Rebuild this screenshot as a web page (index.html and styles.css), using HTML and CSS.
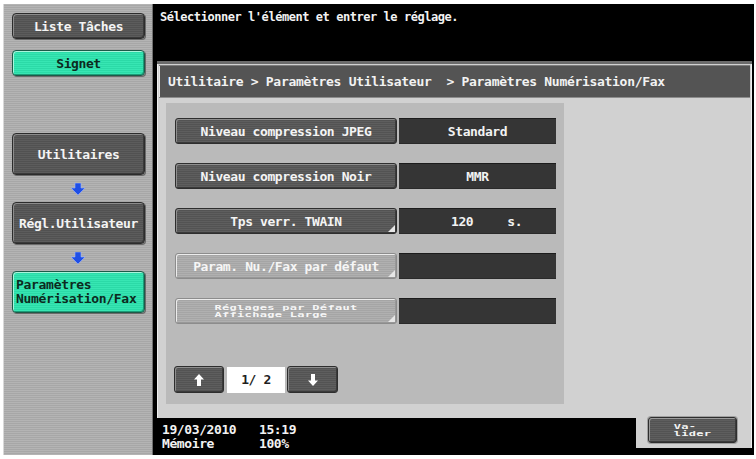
FILE: index.html
```html
<!DOCTYPE html>
<html lang="fr">
<head>
<meta charset="utf-8">
<title>Paramètres Numérisation/Fax</title>
<link rel="stylesheet" href="styles.css">
</head>
<body>
<div class="device">
  <aside class="side">
    <div class="nav dark short">Liste Tâches</div>
    <div class="nav green short signet">Signet</div>
    <div class="trail">
      <div class="nav dark tall">Utilitaires</div>
      <svg class="step" width="14" height="12" viewBox="0 0 14 12"><path d="M4 0h6v5h4L7 12 0 5h4z" fill="#1f4fe6" stroke="#9fb6ff" stroke-width="0.6"/></svg>
      <div class="nav dark tall">Régl.Utilisateur</div>
      <svg class="step" width="14" height="12" viewBox="0 0 14 12"><path d="M4 0h6v5h4L7 12 0 5h4z" fill="#1f4fe6" stroke="#9fb6ff" stroke-width="0.6"/></svg>
      <div class="nav green tall two">Paramètres<br>Numérisation/Fax</div>
    </div>
  </aside>

  <main class="main">
    <header class="message">Sélectionner l'élément et entrer le réglage.</header>

    <section class="panel">
      <div class="crumb">Utilitaire &gt; Paramètres Utilisateur  &gt; Paramètres Numérisation/Fax</div>

      <div class="content">
        <div class="list">
          <div class="row">
            <div class="key">Niveau compression JPEG</div>
            <div class="value">Standard</div>
          </div>
          <div class="row">
            <div class="key">Niveau compression Noir</div>
            <div class="value">MMR</div>
          </div>
          <div class="row">
            <div class="key sub">Tps verr. TWAIN</div>
            <div class="value split"><span>120</span><span>s.</span></div>
          </div>
          <div class="row">
            <div class="key sub off">Param. Nu./Fax par défaut</div>
            <div class="value"></div>
          </div>
          <div class="row">
            <div class="key sub off"><span class="squash">Réglages par Défaut<br>Affichage Large</span></div>
            <div class="value"></div>
          </div>

          <div class="pager">
            <div class="page-btn up">
              <svg width="10" height="12" viewBox="0 0 10 12"><path d="M5 0L10 5.5H7V12H3V5.5H0z" fill="#fff"/></svg>
            </div>
            <div class="page-num">1/ 2</div>
            <div class="page-btn down">
              <svg width="10" height="12" viewBox="0 0 10 12"><path d="M3 0H7V6.5H10L5 12L0 6.5H3z" fill="#fff"/></svg>
            </div>
          </div>
        </div>
      </div>

      <div class="bottom">
        <div class="status">
          <div class="status-line"><span class="col">19/03/2010</span><span>15:19</span></div>
          <div class="status-line"><span class="col">Mémoire</span><span>100%</span></div>
        </div>
        <div class="confirm">
          <div class="ok"><span class="squash">Va-<br>lider</span></div>
        </div>
      </div>
    </section>
  </main>
</div>
</body>
</html>
```

FILE: styles.css
```css
* {
  box-sizing: border-box;
}

body {
  margin: 0;
  background: #ffffff;
  font-family: "DejaVu Sans Mono", "Liberation Mono", monospace;
  font-size: 13px;
  font-weight: bold;
  letter-spacing: -0.4px;
  color: #f2f2f2;
}

.device {
  display: flex;
  width: 751px;
  height: 451px;
  margin: 4px 0 0 3px;
}

/* ---------- left navigation column ---------- */
.side {
  width: 150px;
  flex: none;
  padding: 9px 0 0 9px;
  background: repeating-linear-gradient(to bottom, #b4b4b4 0 1px, #a7a7a7 1px 2px);
  border-right: 1px solid #707070;
  box-shadow: inset 1px 0 0 #d8d8d8;
}

.nav {
  width: 133px;
  border-radius: 4px;
  display: flex;
  align-items: center;
  justify-content: center;
  text-align: center;
  border: 1px solid #2c2c2c;
}

.nav.short {
  height: 26px;
}

.nav.tall {
  height: 42px;
}

.nav.dark {
  background: repeating-linear-gradient(to bottom, #5c5c5c 0 1px, #515151 1px 2px);
  box-shadow: inset 1px 1px 0 #8c8c8c, inset -1px -1px 0 #3a3a3a, 1px 1px 0 #6a6a6a;
  color: #f4f4f4;
}

.nav.green {
  background: repeating-linear-gradient(to bottom, #37e6b3 0 1px, #2bdaa7 1px 2px);
  box-shadow: inset 1px 1px 0 #a8f5dc, inset -1px -1px 0 #1b9c78, 1px 1px 0 #6a6a6a;
  border-color: #1c5a48;
  color: #0c2a20;
}

.signet {
  margin-top: 11px;
}

.trail {
  margin-top: 57px;
  display: flex;
  flex-direction: column;
}

.step {
  display: block;
  margin: 8px 0 7px 59px;
}

.nav.two {
  justify-content: flex-start;
  text-align: left;
  padding-left: 3px;
  line-height: 14px;
  letter-spacing: -0.3px;
}

/* ---------- main area ---------- */
.main {
  flex: 1;
  display: flex;
  flex-direction: column;
  background: #000000;
}

.message {
  height: 57px;
  flex: none;
  padding: 6px 0 0 7px;
  font-size: 12px;
  letter-spacing: -0.45px;
}

.panel {
  flex: 1;
  margin: 0 2px 0 4px;
  display: flex;
  flex-direction: column;
  background: #d1d1d1;
  border-top: 3px solid #6b6b6b;
  box-shadow: inset 1px 0 0 #eeeeee, inset -1px 0 0 #eeeeee;
}

.crumb {
  height: 32px;
  flex: none;
  margin: 1px 2px 0 2px;
  padding: 0 0 0 9px;
  display: flex;
  align-items: center;
  white-space: pre;
  letter-spacing: -0.3px;
  background: #545454;
  box-shadow: inset 0 1px 0 #7c7c7c, inset 1px 0 0 #e6e6e6, 0 1px 0 #8c8c8c;
}

.content {
  flex: none;
  padding: 6px 0 0 9px;
}

.list {
  width: 398px;
  height: 301px;
  padding: 15px 0 0 9px;
  background: #bababa;
}

.row {
  display: flex;
  gap: 2px;
  height: 26px;
  margin-bottom: 19px;
}

.key {
  position: relative;
  width: 222px;
  height: 26px;
  border-radius: 3px;
  display: flex;
  align-items: center;
  justify-content: center;
  border: 1px solid #2e2e2e;
  background: repeating-linear-gradient(to bottom, #5e5e5e 0 1px, #535353 1px 2px);
  box-shadow: inset 1px 1px 0 #8e8e8e, inset -1px -1px 0 #3a3a3a;
  color: #f4f4f4;
}

/* corner mark for items that open a sub screen */
.key.sub::after {
  content: "";
  position: absolute;
  right: 1px;
  bottom: 1px;
  border-style: solid;
  border-width: 0 0 7px 7px;
  border-color: transparent transparent #e6e6e6 transparent;
}

.key.off {
  border-color: #8c8c8c;
  background: repeating-linear-gradient(to bottom, #b0b0b0 0 1px, #a5a5a5 1px 2px);
  box-shadow: inset 1px 1px 0 #ececec, inset -1px -1px 0 #989898;
  color: #f6f6f6;
}

.squash {
  display: inline-block;
  font-size: 12px;
  line-height: 12px;
  letter-spacing: 0.3px;
  transform: scaleY(0.62);
  text-align: left;
}

.value {
  width: 157px;
  height: 26px;
  display: flex;
  align-items: center;
  justify-content: center;
  background: #353535;
  border-top: 1px solid #1c1c1c;
  box-shadow: inset 0 -1px 0 #2a2a2a;
  color: #f2f2f2;
}

.value.split {
  justify-content: flex-start;
  padding-left: 52px;
  gap: 34px;
}

.pager {
  display: flex;
  align-items: center;
  margin: 42px 0 0 -1px;
  height: 27px;
}

.page-btn {
  height: 27px;
  border-radius: 3px;
  display: flex;
  align-items: center;
  justify-content: center;
  border: 1px solid #2e2e2e;
  background: repeating-linear-gradient(to bottom, #5e5e5e 0 1px, #535353 1px 2px);
  box-shadow: inset 1px 1px 0 #8e8e8e, inset -1px -1px 0 #3a3a3a;
}

.page-btn.up {
  width: 50px;
}

.page-btn.down {
  width: 51px;
}

.page-num {
  width: 58px;
  height: 26px;
  margin: 0 2px 0 3px;
  display: flex;
  align-items: center;
  justify-content: center;
  background: #ffffff;
  color: #1e1e1e;
}

/* ---------- bottom status row ---------- */
.bottom {
  flex: 1;
  display: flex;
  padding-top: 14px;
}

.status {
  width: 483px;
  margin-left: -4px;
  padding: 5px 0 0 9px;
  line-height: 14px;
  background: #000000;
}

.status-line {
  display: flex;
}

.col {
  width: 97px;
}

.confirm {
  flex: 1;
  margin-top: -14px;
  padding: 13px 0 0 12px;
  border-bottom: 7px solid #000000;
}

.ok {
  width: 89px;
  height: 26px;
  border-radius: 3px;
  display: flex;
  align-items: center;
  justify-content: center;
  border: 1px solid #2e2e2e;
  background: repeating-linear-gradient(to bottom, #5e5e5e 0 1px, #535353 1px 2px);
  box-shadow: inset 1px 1px 0 #9a9a9a, inset -1px -1px 0 #3a3a3a, 0 0 0 1px #a0a0a0;
  color: #f4f4f4;
}
```
